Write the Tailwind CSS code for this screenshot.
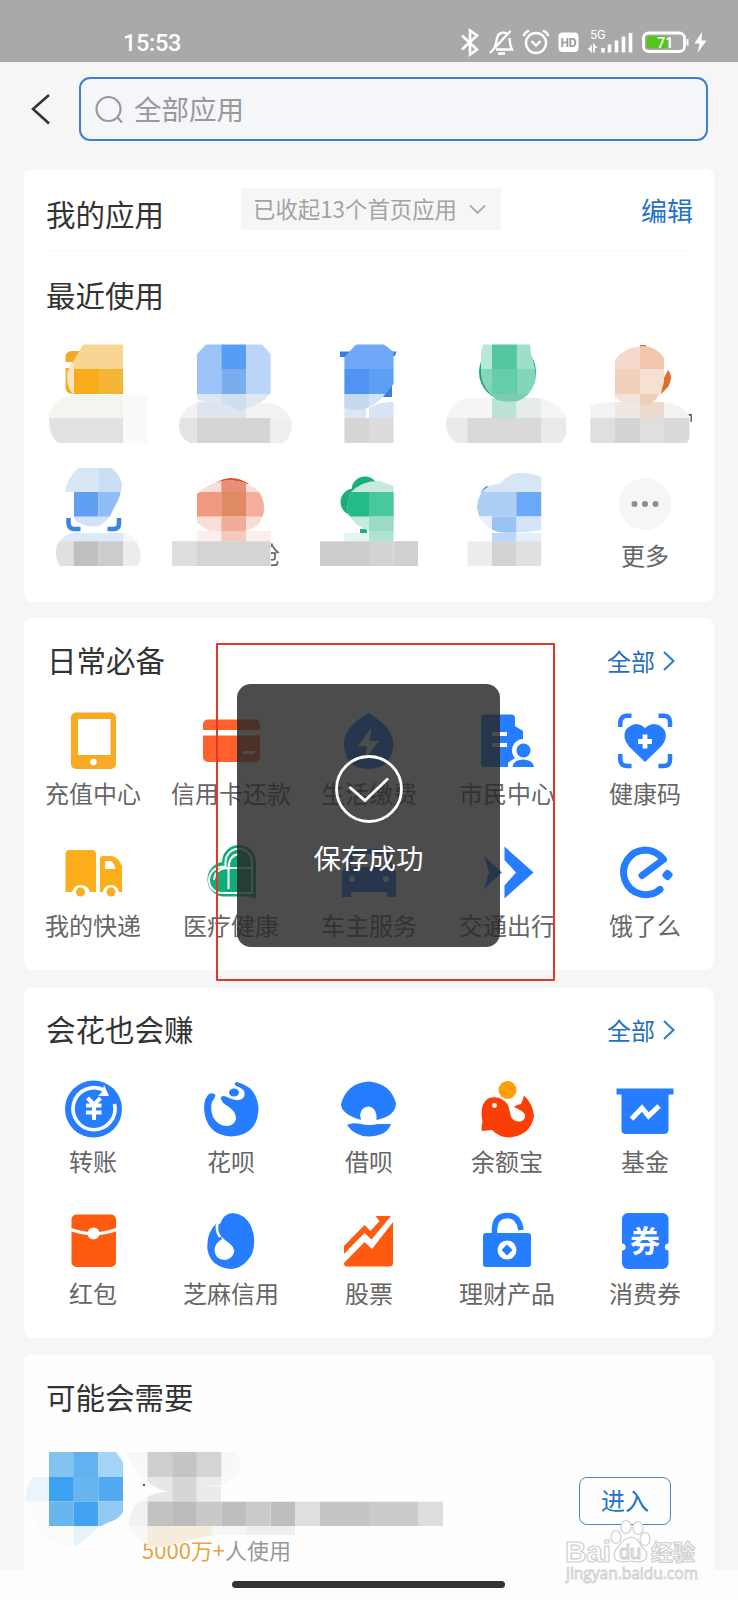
<!DOCTYPE html>
<html lang="zh-CN">
<head>
<meta charset="utf-8">
<title>全部应用</title>
<script src="https://cdn.jsdelivr.net/npm/@tailwindcss/browser@4"></script>
</head>
<body class="bg-[#fdfdfd]">
<div class="relative w-[738px] h-[1600px] overflow-hidden font-['Noto_Sans_CJK_SC',sans-serif] text-[#333]">

<!-- status bar -->
<header class="h-[62px] bg-[#a9a9a9] flex items-start justify-between pl-[123px] pr-[28px] text-white">
  <span class="mt-[28px] h-[30px] leading-[30px] text-[23.5px] font-medium tracking-[-0.3px] font-['Roboto',sans-serif]">15:53</span>
  <svg class="mt-[24px] w-[252px] h-[38px]" viewBox="458 24 252 38" fill="none" stroke="#fff" stroke-width="2.4">
    <path d="M462 35.500L477 49.500L470 54.500V30.500L477 35.500L462 49.500" stroke-width="2.600"/>
    <path d="M494 48.500C497 45.500 495.500 40 498 35.500C500 32 506 31.500 508 35M509.500 38C510 43 510 46 512 49.500H496M490 53L510.500 31M498 53.500H505"/>
    <circle cx="536" cy="43" r="10"/><path d="M531.500 41L536 45.500L540.500 41M523.500 36C524.500 33 526.500 31.500 529 30.500M548.500 36C547.500 33 545.500 31.500 543 30.500"/>
    <rect x="558.500" y="32.500" width="20" height="19.500" rx="4" fill="#fff" stroke="none"/>
    <text x="560.500" y="47" font-family="Roboto,sans-serif" font-size="12" font-weight="700" fill="#999" stroke="none" textLength="16">HD</text>
    <text x="590" y="39" font-family="Roboto,sans-serif" font-size="12.500" fill="#fff" stroke="none">5G</text>
    <path d="M588.500 48L591 51V45.500M596.500 48L594 45V52.500" stroke-width="1.700"/>
    <path d="M603 48V52.500M609.500 44.500V52.500M616.500 40.500V52.500M623.500 36.500V52.500M630.500 33V52.500" stroke-width="3.600"/>
    <rect x="643.500" y="33" width="41" height="18.500" rx="5" stroke-width="2.800"/>
    <rect x="646.500" y="36" width="21" height="12.500" rx="2" fill="#55c51b" stroke="none"/>
    <path d="M687.500 39V45.500" stroke-width="2"/>
    <text x="657" y="47.700" font-family="Roboto,sans-serif" font-size="14.500" font-weight="500" fill="#fff" stroke="none">71</text>
    <path d="M702 32L694.500 43.500H699.500L697.500 53L706.500 40.500H701.500Z" fill="#fff" stroke="none"/>
  </svg>
</header>

<!-- search bar -->
<div class="h-[107px] bg-[#f6f6f7] flex items-start pt-[15px] pl-[30px]">
  <svg class="w-[22px] h-[34px] mt-[15px]" viewBox="30 92 22 34"><path d="M49 95L33 109L49 123.500" fill="none" stroke="#333" stroke-width="2.600"/></svg>
  <div class="ml-[27px] w-[629px] h-[64px] rounded-[11px] border-2 border-[#3b82c8] bg-[#f5f6f9] flex items-center pl-[13px]">
    <svg class="w-[32px] h-[32px]" viewBox="0 0 32 32" fill="none" stroke="#999" stroke-width="2.200"><circle cx="14.500" cy="16" r="12"/><path d="M23.500 24.500L28 29.500"/></svg>
    <span class="ml-[8px] mb-[2px] text-[27.5px] leading-[36px] text-[#999]">全部应用</span>
  </div>
</div>

<main class="h-[1401px] bg-[#f6f6f6] pl-[24px]">
<!-- my apps -->
<section class="w-[690px] h-[433px] bg-white rounded-[8px]">
  <div class="flex h-[82px] border-b border-[#f8f8f8] mx-[22px]">
    <h2 class="w-[195px] pt-[24px] text-[29.5px] leading-[40px]">我的应用</h2>
    <div class="mt-[19px] w-[260px] h-[42px] bg-[#f6f6f6] flex items-center pl-[12px] text-[#a3a3a3] text-[22.4px] whitespace-nowrap">
      <span class="leading-[32px] mb-[2px]">已收起13个首页应用</span>
      <svg class="w-[17px] h-[11px] ml-[12px] shrink-0" viewBox="0 0 17 11"><path d="M1 1.500L8.500 9L16 1.500" fill="none" stroke="#aaa" stroke-width="1.800"/></svg>
    </div>
    <a class="ml-auto mr-[-1px] pt-[24px] text-[26px] leading-[34px] text-[#1f74c9]">编辑</a>
  </div>
  <h2 class="ml-[22px] mt-[23px] text-[29.5px] leading-[40px] h-[40px]">最近使用</h2>

  <div class="mt-[26px] grid grid-cols-5">
    <svg class="w-[138px] h-[118px]" viewBox="24 340 138 118">
      <clipPath id="a1"><path d="M83 344.500H123V389Q122 394 118 394H73Q68 388 67 380V372Q74 360 83 344.500Z"/></clipPath>
      <clipPath id="a2"><path d="M142 395Q160 395 168 404V443H58Q49 436 49 420Q49 400 73 395Z"/></clipPath>
      <path d="M73 351H123V394H72Q65.500 393 65.500 387V368H70L65.500 361V356Q66 351 73 351Z" fill="#f3a923"/><path d="M65 362H72V367H65Z" fill="#fff"/>
      <g clip-path="url(#a1)"><path fill="#fbe3bd" d="M60 344h14v50H60z"/><path fill="#f8d593" d="M74 344h50v25H74z"/><path fill="#faab19" d="M74 369h24.500v25H74z"/><path fill="#f5b636" d="M98.500 369H124v25H98.500z"/></g>
      <g clip-path="url(#a2)"><path fill="#f4f4f1" d="M49 395h74v23H49z"/><path fill="#fafafa" d="M123 395h25v48h-25z"/><path fill="#e2e2e2" d="M49 418h74v25H49z"/></g>
    </svg>
    <svg class="w-[138px] h-[118px]" viewBox="162 340 138 118">
      <clipPath id="b1"><path d="M206 344.500H262L270.600 354V393Q263 404 247 408L240 411L225 404Q207 405 197 399V354Z"/></clipPath>
      <clipPath id="b2"><path d="M190 443Q179 438 179 425Q181 405 201 402L225 404Q255 402 275 404Q292 412 292 425Q291 439 283 443Z"/></clipPath>
      <g clip-path="url(#b2)"><path fill="#f2f2f2" d="M179 400h114v18H179z"/><path fill="#dfe5ee" d="M197 400h49v18h-49z"/><path fill="#e5e4e5" d="M179 418h18v25h-18z"/><path fill="#d6d5d6" d="M197 418h73.600v25H197z"/><path fill="#efefef" d="M270.600 418H293v25h-22.400z"/></g>
      <g clip-path="url(#b1)"><path fill="#9dc4f9" d="M197 344h24.500v50H197z"/><path fill="#579cf6" d="M221.400 344H246v25h-24.600z"/><path fill="#79adee" d="M221.400 369H246v25h-24.600z"/><path fill="#bad5f6" d="M246 344h25v50h-25z"/><path fill="#dfe7f3" d="M197 394h74v20h-74z"/><path fill="#d0dfef" d="M221.400 394H246v24h-24.600z"/></g>
    </svg>
    <svg class="w-[138px] h-[118px]" viewBox="300 340 138 118">
      <clipPath id="c1"><path d="M356 344.500H384L393.600 352V384L382 398Q370 410 357 410L344.400 408V357Z"/></clipPath>
      <path fill="#3a7edc" d="M340 351.500H352V357H340zM390 351.500H396.500L395 356H392V397H378Z"/>
      <path fill="#dce6f3" d="M344.400 394H366V418H344.400z"/><path fill="#d7e4f6" d="M369 408Q382 401 393.600 402V418H369z"/>
      <g clip-path="url(#c1)"><path fill="#70a8f7" d="M344 344h50v25h-50z"/><path fill="#4f94f0" d="M344 369h25v25h-25z"/><path fill="#5c9ff3" d="M369 369h25v25h-25z"/><path fill="#c6d8ef" d="M344 394h25v20h-25z"/><path fill="#d3e3f8" d="M369 394h25v20h-25z"/></g>
      <path fill="#d6d6d6" d="M344.400 418H369v25h-24.600z"/><path fill="#dbdbdb" d="M369 418h24.600v25H369z"/>
    </svg>
    <svg class="w-[138px] h-[118px]" viewBox="438 340 138 118">
      <clipPath id="d1"><path d="M483 344.500H530L531 355Q537 370 535 382Q530 397 518 401Q508 403 497 400Q482 388 481 375V352Z"/></clipPath>
      <clipPath id="d2"><path d="M458 443Q446 438 446 422Q450 400 467 398H535Q560 400 566 418V435L561 443Z"/></clipPath>
      <circle cx="507.500" cy="372" r="28.500" fill="#17a777"/><path fill="#fff" d="M479 340h58v5h-58z"/>
      <g clip-path="url(#d2)"><path fill="#f5f5f5" d="M446 398h120v20H446z"/><path fill="#bae3d5" d="M492 398h24.600v20H492z"/><path fill="#e6ecea" d="M516.600 398h24.600v20h-24.600z"/><path fill="#ebe9ea" d="M446 418h22v25h-22zM541 418h26v25h-26z"/><path fill="#d9d9d9" d="M467.400 418h73.800v25h-73.800z"/></g>
      <g clip-path="url(#d1)"><path fill="#b7e8d8" d="M478 344h14v25h-14z"/><path fill="#53c7a0" d="M492 344h24.600v25H492z"/><path fill="#9ddfc8" d="M516.600 344H540v25h-23.400z"/><path fill="#82d6ba" d="M478 369h14v25h-14zM516.600 369H540v25h-23.400z"/><path fill="#65cdaa" d="M492 369h24.600v25H492z"/><path fill="#79ceb2" d="M485 394h44v10h-44z"/></g>
    </svg>
    <svg class="w-[138px] h-[118px]" viewBox="576 340 138 118">
      <clipPath id="e1"><path d="M615 360Q624 347 643 346Q656 346 664 358V382Q661 396 650 405H628L615 398Z"/></clipPath>
      <clipPath id="e2"><path d="M590.400 406Q600 402 615 402H665Q683 404 689.500 416V438L687 443H590.400Z"/></clipPath>
      <path fill="#e06d26" d="M668 370Q674 377 668 387L661 394L663 380ZM640 345h6v3h-6z"/><path fill="#666" d="M687 414h5v8h-1.500v-6H687z"/>
      <g clip-path="url(#e2)"><path fill="#f1f4f3" d="M590 400h100v18H590z"/><path fill="#eee7e3" d="M615 400h25v18h-25z"/><path fill="#ecd9ce" d="M640 400h24v18h-24z"/><path fill="#dfdfdf" d="M590 418h25v25h-25zM640 418h24v25h-24z"/><path fill="#d3d3d3" d="M615 418h25v25h-25z"/><path fill="#dadada" d="M664 418h26v25h-26z"/></g>
      <g clip-path="url(#e1)"><path fill="#f5dacb" d="M610 344h30v25h-30z"/><path fill="#f3c5aa" d="M640 344h25v25h-25z"/><path fill="#f3d0b9" d="M610 369h30v25h-30z"/><path fill="#f6e0d2" d="M640 369h30v25h-30z"/><path fill="#f1e4dd" d="M610 394h30v14h-30z"/><path fill="#f0ceba" d="M640 394h25v12h-25z"/></g>
    </svg>

    <svg class="w-[138px] h-[118px]" viewBox="24 458 138 118">
      <clipPath id="f1"><path d="M78 468H112Q120 475 122 484Q121 497 114 508Q108 523 98 526Q86 528 76 521L74 517V492H65Q67 478 78 468Z"/></clipPath>
      <clipPath id="f2"><path d="M60 566Q54 556 57 545Q64 533 76 533H127Q140 541 141 557L138 566Z"/></clipPath>
      <path fill="none" stroke="#3d83e0" stroke-width="4.500" d="M68.500 518V523Q69 529 74 529H80.500M107.500 529H114Q119 529 119 523V518"/>
      <g clip-path="url(#f1)"><path fill="#d8e7f5" d="M64 467h34.500v25H64z"/><path fill="#cbdef4" d="M98.400 467H123v25H98.400z"/><path fill="#609ff2" d="M74 492h24.400v25H74z"/><path fill="#8fbef6" d="M98.400 492H123v25H98.400z"/><path fill="#d3e2f5" d="M74 516.600h50V528H74z"/></g>
      <g clip-path="url(#f2)"><path fill="#dce9f8" d="M56 532h67v9.500H56z"/><path fill="#f5f5f5" d="M123 532h19v9.500h-19z"/><path fill="#e0e0e0" d="M56 541.200h18V566H56z"/><path fill="#c0c0c0" d="M73.800 541.200h24.600V566H73.800z"/><path fill="#cccccc" d="M98.400 541.200H123V566H98.400z"/><path fill="#ececec" d="M123 541.200h19V566h-19z"/></g>
    </svg>
    <svg class="w-[138px] h-[118px]" viewBox="162 458 138 118">
      <clipPath id="g1"><path d="M197 494Q210 481 230 480Q253 482 261 495Q268 510 259 524Q252 531 240 531H210L197 523Z"/></clipPath>
      <clipPath id="g2"><path d="M271 535h12v35h-12z"/></clipPath>
      <path fill="#e34a2a" d="M214 484Q231 472 249 484z"/>
      <g clip-path="url(#g1)"><path fill="#f8ded7" d="M197 479h68v53h-68z"/><path fill="#e98f77" d="M221.400 479H246v13h-24.600z"/><path fill="#ee9980" d="M197 492h24.400v24.600H197z"/><path fill="#df8a65" d="M221.400 492H246v24.600h-24.600z"/><path fill="#f3ae9c" d="M246 492h20v24.600h-20z"/><path fill="#f0ac98" d="M221.400 516.600H246V532h-24.600z"/></g>
      <path fill="#faefec" d="M197 531h74v10h-74z"/><path fill="#f5cabd" d="M221.400 531H246v10.500h-24.600z"/>
      <path fill="#dedede" d="M172 541.200h25V566h-25z"/><path fill="#d4d4d4" d="M197 541.200h73.600V566H197z"/>
      <text clip-path="url(#g2)" x="256" y="564" font-size="24" fill="#666">抢</text>
    </svg>
    <svg class="w-[138px] h-[118px]" viewBox="300 458 138 118">
      <clipPath id="h1"><path d="M350 493Q362 480 380 481L393.600 486V531H369Q352 525 347 510Z"/></clipPath>
      <g fill="#1aae7c"><circle cx="365" cy="490" r="13.500"/><circle cx="354" cy="502" r="13.500"/><path d="M360 529h7v4h-7z"/></g>
      <g clip-path="url(#h1)"><path fill="#c4ebdd" d="M340 480h60v52h-60z"/><path fill="#24bb87" d="M340 492h29v24.600h-29z"/><path fill="#48c89d" d="M369 492h25v24.600h-25z"/><path fill="#9cdbc4" d="M369 516.600h25V532h-25z"/></g>
      <path fill="#e3f5ef" d="M344.400 533H369v8.500h-24.600z"/><path fill="#b0e4d2" d="M369 531h24.600v10.500H369z"/>
      <path fill="#ccc" d="M320 541.200h49V566h-49z"/><path fill="#d3d3d3" d="M369 541.200h24.600V566H369z"/><path fill="#d0d0d0" d="M393.600 541.200H418V566h-24.400z"/>
    </svg>
    <svg class="w-[138px] h-[118px]" viewBox="438 458 138 118">
      <clipPath id="i1"><path d="M477 507Q478 492 489 486L501 483Q509 473 520 473Q534 473 541.200 477V530Q516 534 498 532Q479 526 477 507Z"/></clipPath>
      <path d="M482 493Q484 488 488 487" stroke="#4a84d0" stroke-width="2" fill="none"/>
      <g clip-path="url(#i1)"><path fill="#d7e6f5" d="M477 472h65v20h-65z"/><path fill="#aecff5" d="M477 492h40v24.600h-40z"/><path fill="#6ba8f7" d="M516.600 492H542v24.600h-25.400z"/><path fill="#e7f0fb" d="M477 516.600h15V534h-15z"/><path fill="#9ac2f3" d="M492 516.600h24.600V534H492z"/><path fill="#d3e3f9" d="M516.600 516.600H542V534h-25.400z"/></g>
      <path fill="#bcd6f9" d="M492 533h24.600v8.500H492z"/><path fill="#e4eefc" d="M516.600 533h24.600v8.500h-24.600z"/><path fill="#ededed" d="M467.400 541.200H492V566h-24.600z"/><path fill="#d3d3d3" d="M492 541.200h24.600V566H492z"/><path fill="#e0e0e0" d="M516.600 541.200h24.600V566h-24.600z"/>
    </svg>
    <div class="flex flex-col items-center pt-[20px]">
      <svg class="w-[52px] h-[52px]" viewBox="0 0 52 52"><circle cx="26" cy="26" r="26" fill="#f6f6f6"/><g fill="#8d8d8d"><circle cx="15.500" cy="26" r="3"/><circle cx="26" cy="26" r="3"/><circle cx="36.500" cy="26" r="3"/></g></svg>
      <span class="mt-[9px] text-[24px] leading-[32px] text-[#666]">更多</span>
    </div>
  </div>
</section>

<!-- daily essentials -->
<section class="mt-[16px] w-[690px] h-[352px] bg-white rounded-[8px] pt-[21px]">
  <div class="flex items-center justify-between h-[40px] pl-[23px] pr-[39px]">
    <h2 class="text-[29.5px] leading-[40px]">日常必备</h2>
    <a class="flex items-center text-[24px] leading-[32px] text-[#1f6fc4] mt-[4px]">全部<svg class="ml-[8px] w-[12px] h-[20px]" viewBox="0 0 12 20"><path d="M1 1L10.500 10L1 19" fill="none" stroke="#2f7fd2" stroke-width="2.200"/></svg></a>
  </div>
  <div class="mt-[32px] grid grid-cols-5 gap-y-[34px] text-[24px] leading-[32px] text-[#666] whitespace-nowrap">
    <div class="flex flex-col items-center gap-[6px]"><svg class="w-[60px] h-[60px]" viewBox="63 711 60 60"><rect x="71" y="712.500" width="45" height="56.500" rx="5" fill="#f7aa24"/><path fill="#fff" d="M78 719h32.500v36H78z"/><circle cx="93.500" cy="762" r="3.200" fill="#fff"/></svg>充值中心</div>
    <div class="flex flex-col items-center gap-[6px]"><svg class="w-[60px] h-[60px]" viewBox="201 711 60 60"><rect x="203" y="719.500" width="57" height="42.500" rx="5" fill="#ff602c"/><path fill="#fff" d="M203 730h57v5.500h-57zM243 751h12v3h-12z"/></svg>信用卡还款</div>
    <div class="flex flex-col items-center gap-[6px]"><svg class="w-[60px] h-[60px]" viewBox="339 711 60 60"><path fill="#267dff" d="M368.500 713Q393 727 393.500 744Q392 769 368.500 769Q345 769 344 744Q344 727 368.500 713Z"/><path fill="#fff" d="M371 728L358 746H367L365 759L379 741H370Z"/></svg>生活缴费</div>
    <div class="flex flex-col items-center gap-[6px]"><svg class="w-[60px] h-[60px]" viewBox="477 711 60 60"><path fill="#267dff" d="M485 714.500H512Q515 715 515 718V726L523 731V740L520 767H485Q481 767 481 763V718Q481 715 485 714.500Z"/><path fill="#fff" d="M492 732h15v4h-15zM492 743h15v4h-15z"/><circle cx="523.500" cy="750.500" r="11.500" fill="#fff"/><path fill="#fff" d="M508 771V763Q514 757 523 757H537V771Z"/><circle cx="523.500" cy="750.500" r="7" fill="#267dff"/><path fill="#267dff" d="M512.500 767Q513 760 523 759.500Q533 760 534 767Z"/></svg>市民中心</div>
    <div class="flex flex-col items-center gap-[6px]"><svg class="w-[60px] h-[60px]" viewBox="615 711 60 60"><path fill="none" stroke="#267dff" stroke-width="4.500" d="M620.300 727V722Q621 716 627 715.800H631.500M658.500 715.800H664Q669.700 716 670 722V727M670 754V760Q669.700 766 664 766H658.500M631.500 766H627Q621 766 620.300 760V754"/><path fill="#267dff" d="M645 762L629 746.500Q622 738 625.500 730.500Q630 724 637 724Q641.500 724.500 645 728Q649 724.500 653 724Q661 724 665 731Q668 739 661 746.500Z"/><path stroke="#fff" stroke-width="4.800" d="M638 741.500H652M645 734.500V748.500"/></svg>健康码</div>

    <div class="flex flex-col items-center gap-[6px]"><svg class="w-[60px] h-[60px]" viewBox="63 843 60 60"><g fill="#fdae1b"><path d="M69 850H92Q96 850 96 854V892H90Q88 885 80.500 885Q74 885 72 892H65.500V854Q65.500 850 69 850ZM103 856H112Q118 857 122 866V892H119Q117 885 111 885Q104 885 103 892H100V859Q100 856 103 856Z"/><circle cx="80.500" cy="892" r="4.500"/><circle cx="111" cy="892" r="4.500"/></g><path fill="#fff" d="M105 861H111Q114 862 115.500 869H105Z"/></svg>我的快递</div>
    <div class="flex flex-col items-center gap-[6px]"><svg class="w-[60px] h-[60px]" viewBox="201 843 60 60" fill="none"><path fill="#11ad76" d="M256 899Q252 896 245 896.500H222A17.500 17.500 0 0 1 222 862A17 17 0 0 1 256 862Z"/><path stroke="#fff" stroke-width="2" d="M252 893H222A13 13 0 0 1 209 880Q210 867 225.500 866.500V862A13 13 0 0 1 252 862ZM228.500 889V868Q229 855 239 854M214 880Q215 868.500 228 868H252"/></svg>医疗健康</div>
    <div class="flex flex-col items-center gap-[6px]"><svg class="w-[60px] h-[60px]" viewBox="339 843 60 60"><path fill="#267dff" d="M349 852Q350 849 354 849H384Q388 849 389 852L393 868Q396 870 396 873V897H387V892H351V897H342V873Q342 870 345 868Z"/><path fill="#fff" d="M354 854H384L387 867H351Z"/><circle cx="352" cy="879" r="3" fill="#fff"/><circle cx="386" cy="879" r="3" fill="#fff"/></svg>车主服务</div>
    <div class="flex flex-col items-center gap-[6px]"><svg class="w-[60px] h-[60px]" viewBox="477 843 60 60" fill="#267dff"><path d="M504.500 846.500L533.500 872.500L504.500 898.500V885.500L516 872.500L504.500 860ZM484 856L502 872.500L484 889L489 872.500Z"/></svg>交通出行</div>
    <div class="flex flex-col items-center gap-[6px]"><svg class="w-[60px] h-[60px]" viewBox="615 843 60 60"><path fill="none" stroke="#267dff" stroke-width="7" d="M642 875.500L663.500 859.500Q656 850 645 850A22.300 22.300 0 1 0 660 889.500" stroke-linejoin="round" stroke-linecap="round"/><rect x="-4.500" y="-4.500" width="9" height="9" rx="3" transform="translate(667.500 875) rotate(40)" fill="#267dff"/></svg>饿了么</div>
  </div>
</section>

<!-- money -->
<section class="mt-[18px] w-[690px] h-[350px] bg-white rounded-[8px] pt-[20px]">
  <div class="flex items-center justify-between h-[40px] pl-[22px] pr-[39px]">
    <h2 class="text-[29.5px] leading-[40px]">会花也会赚</h2>
    <a class="flex items-center text-[24px] leading-[32px] text-[#1f6fc4] mt-[4px]">全部<svg class="ml-[8px] w-[12px] h-[20px]" viewBox="0 0 12 20"><path d="M1 1L10.500 10L1 19" fill="none" stroke="#2f7fd2" stroke-width="2.200"/></svg></a>
  </div>
  <div class="mt-[31px] grid grid-cols-5 gap-y-[34px] text-[24px] leading-[32px] text-[#666] whitespace-nowrap">
    <div class="flex flex-col items-center gap-[6px]"><svg class="w-[60px] h-[60px]" viewBox="63 1079 60 60" fill="none"><circle cx="93.500" cy="1109" r="28.500" fill="#267dff"/><path stroke="#fff" stroke-width="3.600" d="M114.500 1104A21 21 0 1 1 104.500 1090.500"/><path fill="#fff" d="M104 1085L109 1096H98L102 1092Z"/><path stroke="#fff" stroke-width="4" d="M87.500 1098L94 1104.500L100.500 1098M86 1105.500H101.500M86 1112.500H101.500M94 1103V1120"/></svg>转账</div>
    <div class="flex flex-col items-center gap-[6px]"><svg class="w-[60px] h-[60px]" viewBox="201 1079 60 60"><path fill="#267dff" d="M237 1082Q257 1087 258.500 1108Q258 1135 231 1136.500Q206 1135 204 1109Q204 1098 209 1094Q213 1092 215.500 1095Q215 1098 212 1102Q210 1109 213 1117Q218 1126 227 1126Q234 1126 236 1119Q236 1112 229 1107Q220 1102 221 1097Q223 1095 227 1097Q236 1102 242 1099Q246 1096 244 1091Q242 1088 236 1086Q233 1083 237 1082Z"/><ellipse cx="234" cy="1092.500" rx="5" ry="4" fill="#267dff"/></svg>花呗</div>
    <div class="flex flex-col items-center gap-[6px]"><svg class="w-[60px] h-[60px]" viewBox="339 1079 60 60" fill="#267dff"><path d="M368.500 1081.500Q390 1083 396 1103Q396 1116 376.500 1120V1115Q375 1107 368.500 1106.500Q361 1107 360 1115L361 1120Q341 1114 341 1104Q347 1083 368.500 1081.500ZM347 1125Q352 1122 361 1124Q369 1126 378 1124L391 1124Q387 1136 368.500 1136.500Q354 1136 347 1125Z"/></svg>借呗</div>
    <div class="flex flex-col items-center gap-[6px]"><svg class="w-[60px] h-[60px]" viewBox="477 1079 60 60"><circle cx="507.500" cy="1090" r="9" fill="#ff9f0a"/><path fill="#fb3d06" d="M482 1131Q481 1127 482.500 1122Q479 1105 488 1098.500Q500 1094 508 1105Q510 1112 511 1117Q515 1123 522 1121Q527 1118 524 1113Q521 1110 514 1107Q516 1105 521 1104Q523 1100 524 1095.500Q533 1104 534 1116Q531 1135 510 1137.500Q500 1138 492 1130Z"/><circle cx="494.500" cy="1105.500" r="2.400" fill="#fff"/></svg>余额宝</div>
    <div class="flex flex-col items-center gap-[6px]"><svg class="w-[60px] h-[60px]" viewBox="615 1079 60 60"><path fill="#267dff" d="M616.500 1088.500H673.500V1094.500H668.500V1130Q668 1134 664 1134H626Q621.500 1134 621.500 1130V1094.500H616.500Z"/><path fill="none" stroke="#fff" stroke-width="5" d="M631.500 1119L642 1108L648.500 1116L659 1106"/></svg>基金</div>

    <div class="flex flex-col items-center gap-[6px]"><svg class="w-[60px] h-[60px]" viewBox="63 1211 60 60"><rect x="71.500" y="1214.500" width="44.500" height="52.500" rx="5" fill="#ff5b10"/><path d="M71 1229.500Q93.500 1238 116.500 1229.500" stroke="#fff" stroke-width="3" fill="none"/><circle cx="93.500" cy="1233.500" r="6" fill="#fff"/></svg>红包</div>
    <div class="flex flex-col items-center gap-[6px]"><svg class="w-[60px] h-[60px]" viewBox="201 1211 60 60"><path fill="#267dff" d="M220 1224Q224 1213 233 1213Q245 1214 251 1226Q257 1240 252 1254Q244 1268.500 230 1269Q211 1267 207.500 1250Q206 1232 217 1223Z"/><path d="M218 1222Q215 1230 220 1237" stroke="#fff" stroke-width="2.600" fill="none"/><path fill="#fff" d="M219 1234Q222 1238 229 1243Q235 1248 234 1253Q231 1260 224 1260Q215 1259 214.500 1250Q215 1243 222 1239Z"/></svg>芝麻信用</div>
    <div class="flex flex-col items-center gap-[6px]"><svg class="w-[60px] h-[60px]" viewBox="339 1211 60 60"><path fill="#ff5b10" d="M344 1263L364.500 1242L372 1249L393 1222V1263Q393 1266.500 389 1266.500H347Q344 1266.500 344 1263ZM344 1246L364.500 1225L370.500 1231L379.500 1221L375.500 1216H391L371.500 1239.500L364.500 1233L344 1254Z"/></svg>股票</div>
    <div class="flex flex-col items-center gap-[6px]"><svg class="w-[60px] h-[60px]" viewBox="477 1211 60 60"><rect x="483" y="1233" width="48" height="34" rx="3" fill="#267dff"/><path d="M494.500 1234V1229Q495 1215.500 507.500 1215.500Q519 1215.500 521 1230" fill="none" stroke="#267dff" stroke-width="5.500"/><circle cx="507" cy="1250" r="9.500" fill="#fff"/><path fill="#267dff" d="M507 1244.500L512.500 1250L507 1255.500L501.500 1250Z"/></svg>理财产品</div>
    <div class="flex flex-col items-center gap-[6px]"><svg class="w-[60px] h-[60px]" viewBox="615 1211 60 60"><rect x="622" y="1213" width="46.500" height="56" rx="6" fill="#267dff"/><circle cx="622" cy="1247" r="3.600" fill="#fff"/><circle cx="668.500" cy="1247" r="3.600" fill="#fff"/><text x="630" y="1252" font-size="30" font-weight="700" fill="#fff">券</text></svg>消费券</div>
  </div>
</section>

<!-- suggestions -->
<section class="mt-[16px] w-[690px] h-[216px] bg-[#fefefe] rounded-t-[8px] pt-[22px]">
  <h2 class="ml-[22px] text-[29.5px] leading-[40px]">可能会需要</h2>
  <div class="flex mt-[32px]">
    <div class="w-[426px]">
      <p class="ml-[118px] mt-[85px] text-[22px] leading-[32px] h-[32px] text-[#999] whitespace-nowrap"><span class="text-[#e9a23c]">5000万+</span>人使用</p>
    </div>
    <a class="ml-[129px] mt-[29px] w-[92px] h-[48px] rounded-[8px] border-[1.5px] border-[#4a86c5] text-[#1f74c9] text-[24px] leading-[44px] text-center">进入</a>
  </div>
</section>
</main>

<!-- pixelated cover over the suggested app -->
<svg class="absolute left-[24px] top-[1448px] w-[426px] h-[106px]" viewBox="24 1448 426 106">
  <clipPath id="m1"><path d="M49 1452H116L123 1462V1512Q118 1520 109 1522L101 1526H49Z"/></clipPath>
  <clipPath id="m2"><path d="M125.500 1452H236Q242 1458 240 1467Q235 1481 221 1485L197 1486Q182 1492 165 1491Q137 1482 125.500 1452ZM129 1526Q128 1497 165 1492L197 1486H221V1501.600H443V1526H295V1535H215Q185 1540 165 1547Q140 1549 129 1526Z"/></clipPath>
  <path fill="#eaf5fb" d="M49 1477H33Q26 1485 25 1501H49z"/><path fill="#e5f4fc" d="M73.800 1526H98.400Q92 1536 73.800 1547z"/><path fill="#fafcfc" d="M29 1501H49V1526H74V1547Q36 1545 29 1501Z"/>
  <g clip-path="url(#m1)"><path fill="#83c3f0" d="M49 1452h25v25H49z"/><path fill="#61b2ef" d="M73.800 1452h24.600v25H73.800z"/><path fill="#a4d4f6" d="M98.400 1452H123v25H98.400z"/><path fill="#3ba1f0" d="M49 1477h24.800v24.600H49z"/><path fill="#68b6ee" d="M73.800 1477h24.600v24.600H73.800z"/><path fill="#52abf1" d="M98.400 1477H123v24.600H98.400z"/><path fill="#69b6ee" d="M49 1501.600h24.800V1526H49z"/><path fill="#41a3f1" d="M73.800 1501.600h24.600V1526H73.800z"/><path fill="#92c9f4" d="M98.400 1501.600H123V1526H98.400z"/></g>
  <path fill="#555" d="M143 1484h2v2h-2z"/>
  <g clip-path="url(#m2)"><path fill="#f8f8f7" d="M125 1452h120v95H125z"/><path fill="#cecece" d="M147.600 1452h24.600v25h-24.600z"/><path fill="#c4c4c4" d="M172.200 1452h24.600v25h-24.600z"/><path fill="#d4d4d4" d="M196.800 1452h24.600v25h-24.600z"/><path fill="#e7e7e7" d="M147.600 1477h24.600v24.600h-24.600z"/><path fill="#d6d6d6" d="M172.200 1477h24.600v24.600h-24.600z"/><path fill="#ebebeb" d="M196.800 1477h24.600v24.600h-24.600z"/><path fill="#f1f1ef" d="M129 1501.600h19V1526h-19z"/><path fill="#c2c2c2" d="M147.600 1501.600h24.600V1526h-24.600z"/><path fill="#bbb" d="M172.200 1501.600h24.600V1526h-24.600z"/><path fill="#c9c9c9" d="M196.800 1501.600h24.600V1526h-24.600z"/><path fill="#bebebe" d="M221.400 1501.600H246V1526h-24.600zM270.600 1501.600h24.600V1526h-24.600z"/><path fill="#cacaca" d="M246 1501.600h24.600V1526H246z"/><path fill="#dfdfdf" d="M295.200 1501.600h24.600V1526h-24.600z"/><path fill="#c5c5c5" d="M319.800 1501.600H369V1526h-49.200z"/><path fill="#cbcbcb" d="M369 1501.600h49.200V1526H369z"/><path fill="#ddd" d="M418.200 1501.600H443V1526h-24.800z"/><path fill="#f5ecdc" d="M147.600 1526h64v22h-64z"/><path fill="#f5f5f5" d="M212 1526h34v9h-34z"/><path fill="#eee" d="M246 1526h49v9h-49z"/></g>
</svg>

<!-- home indicator -->
<div class="absolute left-[232px] top-[1581px] w-[273px] h-[7px] rounded-full bg-[#333]"></div>

<!-- watermark -->
<svg class="absolute left-[560px] top-[1515px] w-[145px] h-[75px]" viewBox="560 1515 145 75" fill="#fff" stroke="#cfcfcf" stroke-width="1.200">
  <text x="565" y="1562" font-family="Liberation Sans,sans-serif" font-size="30" font-weight="700" textLength="46" lengthAdjust="spacingAndGlyphs">Bai</text>
  <ellipse cx="616" cy="1537" rx="5" ry="6.500"/><ellipse cx="626" cy="1527" rx="5" ry="6.500"/><ellipse cx="638" cy="1528" rx="5" ry="6.500"/><ellipse cx="645" cy="1539" rx="5" ry="6.500"/>
  <path d="M631 1537Q638 1538 642 1547Q650 1553 645 1560Q640 1563 631 1561Q621 1563 616 1560Q611 1553 619 1546Q624 1538 631 1537Z"/>
  <text x="619" y="1559" font-family="Liberation Sans,sans-serif" font-size="20" font-weight="400">du</text>
  <text x="651" y="1560" font-size="22" font-weight="700">经验</text>
  <text x="566" y="1579" font-family="Open Sans,sans-serif" font-size="16.500" stroke-width=".9" textLength="132" lengthAdjust="spacingAndGlyphs">jingyan.baidu.com</text>
</svg>

<!-- saved toast -->
<div class="absolute left-[237px] top-[684px] w-[263px] h-[263px] rounded-[14px] bg-[#282828]/83 flex flex-col items-center pt-[70px] text-white">
  <svg class="w-[70px] h-[70px]" viewBox="0 0 70 70" fill="none" stroke="#fff" stroke-width="2.800"><circle cx="35" cy="35" r="32.500"/><path d="M15.500 33L31 46.500L54 24.500"/></svg>
  <span class="mt-[14px] text-[27.5px] leading-[38px]">保存成功</span>
</div>
<!-- highlight frame -->
<div class="absolute left-[216px] top-[643px] w-[339px] h-[338px] border-2 border-[#e3362c] rounded-[1px]"></div>
</div>
</body>
</html>
